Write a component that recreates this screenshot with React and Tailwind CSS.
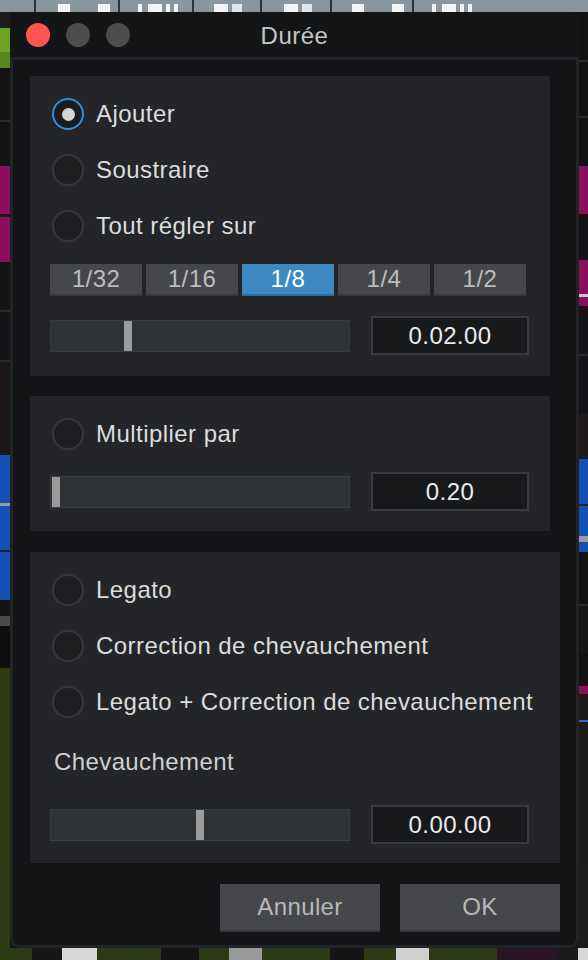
import React from 'react';

const leftStrip = [
  [16, '#1c1c1c'], [24, '#6ca324'], [16, '#58861c'], [52, '#131313'], [2, '#2b2b2b'],
  [44, '#131313'], [48, '#8c0f5e'], [3, '#1a1a1a'], [45, '#8c0f5e'], [48, '#151515'],
  [2, '#2b2b2b'], [48, '#161416'], [2, '#2b2b2b'], [93, '#1b1719'], [48, '#1551b4'],
  [3, '#9a9a9a'], [44, '#1551b4'], [2, '#222222'], [48, '#1551b4'], [16, '#141414'],
  [10, '#4a4a4a'], [42, '#0e0e0e'],
];

const rightStrip = [
  [48, '#121212'], [2, '#2a2a2a'], [54, '#121212'], [2, '#2a2a2a'], [48, '#121212'],
  [48, '#8c0f5e'], [46, '#141214'], [34, '#8c0f5e'], [3, '#c8c8c8'], [9, '#8c0f5e'],
  [48, '#151315'], [2, '#2a2a2a'], [58, '#151315'], [45, '#1e1a1c'], [45, '#1551b4'],
  [2, '#222222'], [30, '#1551b4'], [6, '#9a9a9a'], [10, '#1551b4'], [52, '#121212'],
  [2, '#2a2a2a'], [48, '#161616'], [32, '#121212'], [8, '#8c0f5e'], [26, '#1a1a1a'],
  [2, '#1d6fd0'], [140, '#1a1a1a'],
];

const bottomStrip = [
  [32, '#2c3a15'], [30, '#171717'], [35, '#d8d8d8'], [64, '#2c3a15'], [38, '#151515'],
  [30, '#2c3a15'], [33, '#9a9a9a'], [68, '#2c3a15'], [34, '#151515'], [32, '#2c3a15'],
  [33, '#d0d0d0'], [68, '#2c3a15'], [60, '#2a1426'], [21, '#1a1a1a'], [10, '#d8d8d8'],
];

// toolbar fragments peeking above the dialog: [gap before, width, colour]
const toolMarks = [
  [34, 2, '#2f3438'], [22, 12, '#f4f4f4'], [28, 12, '#f4f4f4'], [8, 2, '#2f3438'],
  [18, 4, '#f4f4f4'], [6, 14, '#f4f4f4'], [4, 4, '#f4f4f4'], [4, 4, '#f4f4f4'],
  [14, 2, '#2f3438'], [20, 14, '#f4f4f4'], [4, 10, '#dfe6ee'], [18, 2, '#2f3438'],
  [22, 14, '#f4f4f4'], [4, 10, '#dfe6ee'], [18, 2, '#2f3438'], [20, 12, '#f4f4f4'],
  [28, 12, '#f4f4f4'], [8, 2, '#2f3438'], [18, 4, '#f4f4f4'], [6, 14, '#f4f4f4'],
  [4, 4, '#f4f4f4'], [4, 4, '#f4f4f4'],
];

function Radio({ checked, label }) {
  return (
    <div className="flex items-center h-[32px] pl-[2px]">
      <div
        className={
          checked
            ? 'w-[32px] h-[32px] rounded-full border-2 border-[#2f8ddb] bg-[#1b1c1e] flex items-center justify-center'
            : 'w-[32px] h-[32px] rounded-full border-2 border-[#37383b] bg-[#1d1e20]'
        }
      >
        {checked && <div className="w-[13px] h-[13px] rounded-full bg-[#d4d4d4]" />}
      </div>
      <span className="ml-[12px] text-[24px] leading-none tracking-[0.45px] text-[#dcdcdc] whitespace-nowrap">{label}</span>
    </div>
  );
}

function SliderRow({ thumb, value }) {
  return (
    <div className="flex items-center gap-[21px] h-[39px]">
      <div className="relative w-[300px] h-[32px] bg-[#303336] border border-[#393c3f]">
        <div className="absolute top-0 h-full w-[8px] bg-[#9c9c9c]" style={{ left: thumb }} />
      </div>
      <div className="w-[158px] h-[39px] bg-[#18191b] border-2 border-[#3a3b3e] flex items-center justify-center text-[24px] tracking-[0.4px] text-[#ececec]">
        {value}
      </div>
    </div>
  );
}

export default function App() {
  const steps = ['1/32', '1/16', '1/8', '1/4', '1/2'];

  return (
    <div className="w-[588px] h-[960px] overflow-hidden flex flex-col bg-[#151515] font-['Liberation_Sans',Arial,sans-serif]">
      {/* toolbar behind the dialog */}
      <div className="h-[12px] flex items-end bg-[#8b959c]">
        {toolMarks.map(([gap, w, c], i) => (
          <div
            key={i}
            style={{ marginLeft: gap, width: w, background: c, height: c === '#2f3438' ? 12 : 8 }}
          />
        ))}
      </div>

      <div className="flex h-[936px]">
        <div className="w-[10px] flex flex-col">
          {leftStrip.map(([h, c], i) => (
            <div key={i} style={{ height: h, background: c }} />
          ))}
          <div className="flex-1 bg-[#2f3b15]" />
        </div>

        {/* dialog */}
        <div className="w-[569px] h-[936px] rounded-[9px] bg-[#141517] flex flex-col overflow-hidden">
          <div className="h-[45px] grid grid-cols-[1fr_auto_1fr] items-center">
            <div className="flex gap-[16px] pl-[16px]">
              <div className="w-[24px] h-[24px] rounded-full bg-[#fe5553]" />
              <div className="w-[24px] h-[24px] rounded-full bg-[#4d4d4f]" />
              <div className="w-[24px] h-[24px] rounded-full bg-[#4d4d4f]" />
            </div>
            <div className="text-[24px] tracking-[0.5px] text-[#c6c6c6] pt-[2px]">Durée</div>
            <div />
          </div>

          <div className="flex-1 border-[3px] border-[#222326] rounded-b-[9px] pl-[17px] pr-[16px] pt-[16px] flex flex-col">
            {/* panel 1 */}
            <div className="w-[520px] bg-[#242528] pt-[22px] pb-[21px] pl-[20px]">
              <div className="flex flex-col gap-[24px]">
                <Radio checked label="Ajouter" />
                <Radio label="Soustraire" />
                <Radio label="Tout régler sur" />
              </div>
              <div className="mt-[22px] flex gap-[4px]">
                {steps.map((s) =>
                  s === '1/8' ? (
                    <div key={s} className="w-[92px] h-[32px] bg-[#3c89c4] border-b-2 border-[#2b6ea5] flex items-center justify-center text-[24px] tracking-[0.5px] text-white">
                      {s}
                    </div>
                  ) : (
                    <div key={s} className="w-[92px] h-[32px] bg-[#46474a] border-b-2 border-[#39393c] flex items-center justify-center text-[24px] tracking-[0.5px] text-[#bdbdbd]">
                      {s}
                    </div>
                  )
                )}
              </div>
              <div className="mt-[20px]">
                <SliderRow thumb={73} value="0.02.00" />
              </div>
            </div>

            {/* panel 2 */}
            <div className="mt-[20px] w-[520px] bg-[#242528] pt-[22px] pb-[20px] pl-[20px]">
              <Radio label="Multiplier par" />
              <div className="mt-[22px]">
                <SliderRow thumb={1} value="0.20" />
              </div>
            </div>

            {/* panel 3 */}
            <div className="mt-[21px] w-[530px] bg-[#242528] pt-[22px] pb-[19px] pl-[20px]">
              <div className="flex flex-col gap-[24px]">
                <Radio label="Legato" />
                <Radio label="Correction de chevauchement" />
                <Radio label="Legato + Correction de chevauchement" />
              </div>
              <div className="mt-[30px] h-[28px] pl-[4px] flex items-center text-[24px] tracking-[0.4px] text-[#d0d0d0]">Chevauchement</div>
              <div className="mt-[29px]">
                <SliderRow thumb={145} value="0.00.00" />
              </div>
            </div>

            <div className="mt-[21px] flex justify-end gap-[20px]">
              <div className="w-[160px] h-[48px] bg-[#46474a] border-b-2 border-[#38393b] flex items-center justify-center text-[24px] tracking-[0.4px] text-[#b9b9b9]">
                Annuler
              </div>
              <div className="w-[160px] h-[48px] bg-[#46474a] border-b-2 border-[#38393b] flex items-center justify-center text-[24px] tracking-[0.4px] text-[#b9b9b9]">
                OK
              </div>
            </div>
          </div>
        </div>

        <div className="w-[9px] flex flex-col">
          {rightStrip.map(([h, c], i) => (
            <div key={i} style={{ height: h, background: c }} />
          ))}
          <div className="flex-1 bg-[#1c1c1c]" />
        </div>
      </div>

      <div className="h-[12px] flex">
        {bottomStrip.map(([w, c], i) => (
          <div key={i} style={{ width: w, background: c }} />
        ))}
      </div>
    </div>
  );
}
